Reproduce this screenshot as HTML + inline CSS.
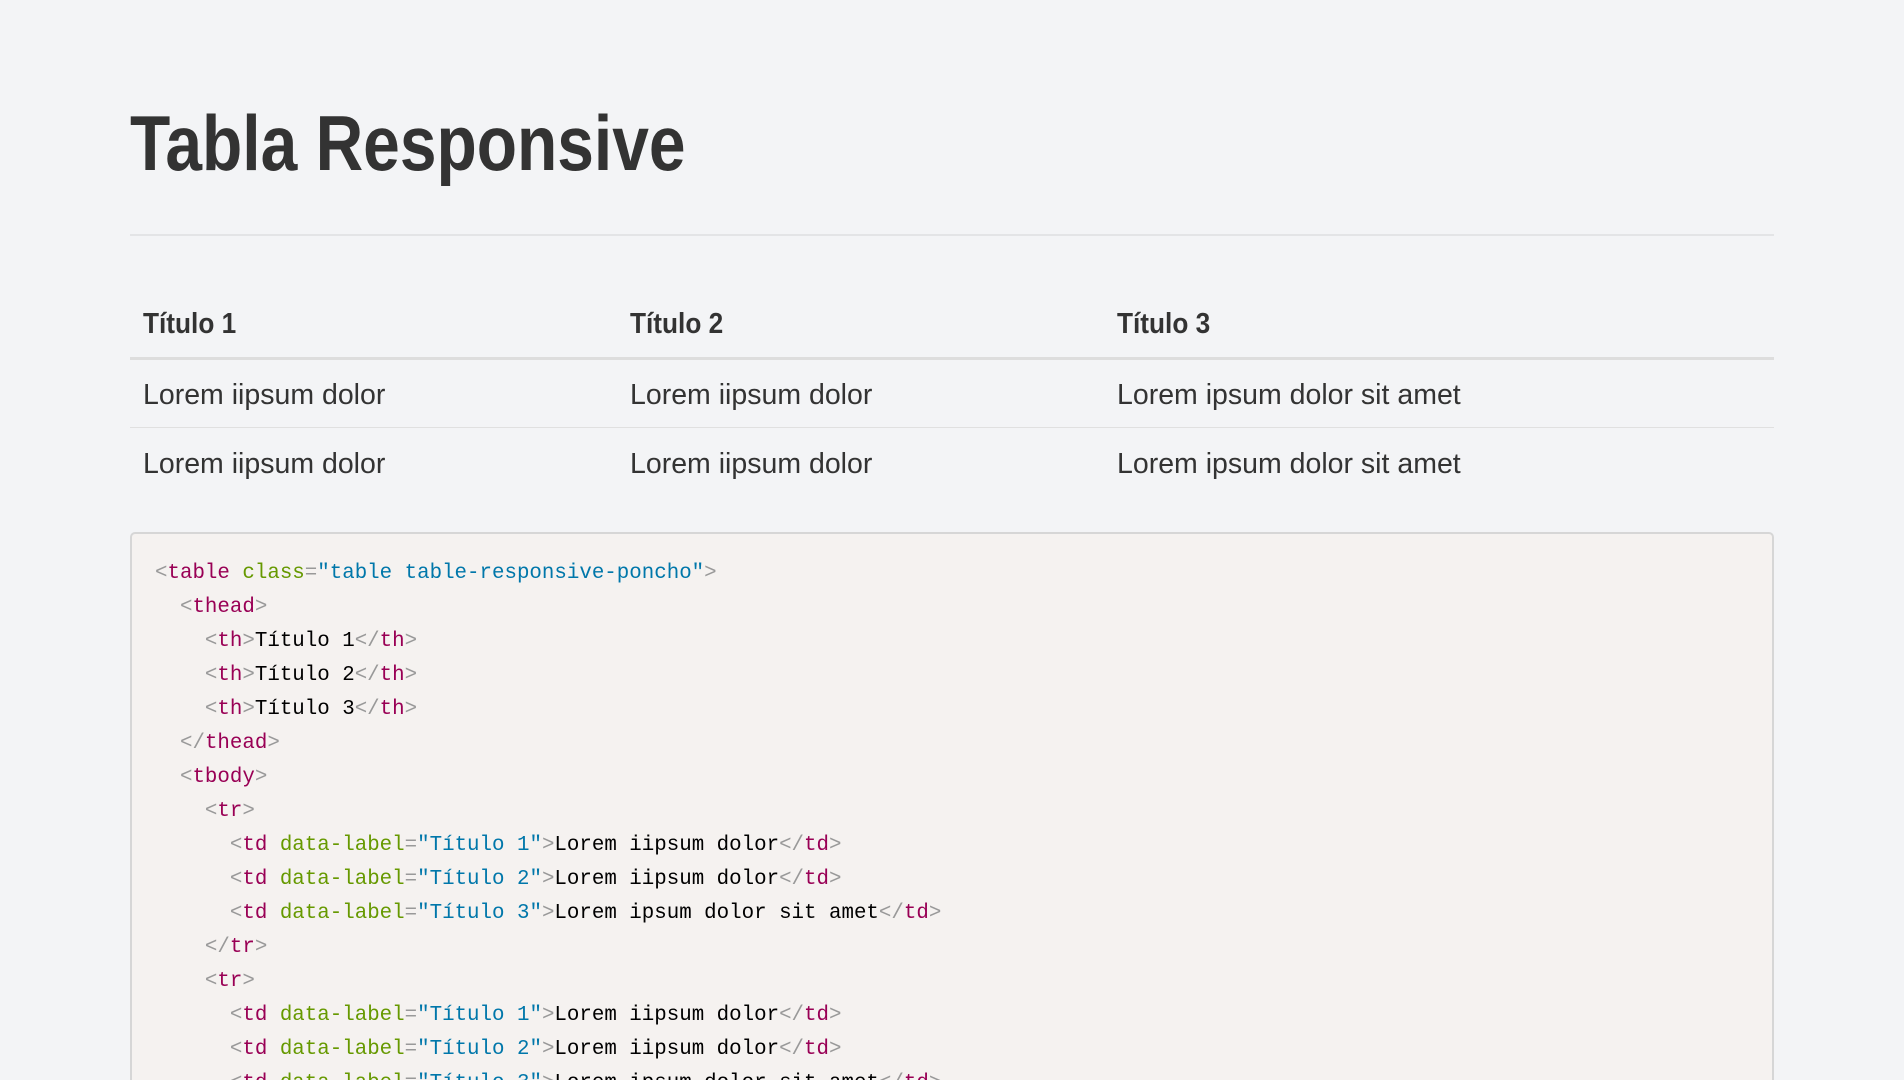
<!DOCTYPE html>
<html><head><meta charset="utf-8"><style>
html,body{margin:0;padding:0;background:#f3f4f6;width:1904px;height:1080px;overflow:hidden;font-family:"Liberation Sans",sans-serif;color:#333;position:relative}
h1{position:absolute;left:130px;top:98px;margin:0;font-size:78px;font-weight:bold;line-height:90px;transform:scaleX(0.845);transform-origin:left top;color:#333;white-space:nowrap}
.hr{position:absolute;left:130px;top:234px;width:1644px;height:2px;background:#e3e4e6}
.th,.td{position:absolute;font-size:28.5px;white-space:nowrap;line-height:30px}
.th{font-weight:bold;transform:scaleX(0.92);transform-origin:left top}
.l{position:absolute;left:130px;width:1644px;background:#ddd}
.code{position:absolute;left:130px;top:532px;width:1640px;height:560px;border:2px solid #d6d6d6;border-bottom:none;border-radius:5px 5px 0 0;background:#f5f2f0}
pre{position:absolute;left:155px;top:557px;margin:0;font-family:"Liberation Mono",monospace;font-size:20.8px;line-height:34px;color:#000}
.t{color:#905}.p{color:#999}.a{color:#690}.v{color:#07a}
</style></head><body>
<h1>Tabla Responsive</h1>
<div class="hr"></div>
<div class="th" style="left:143px;top:309px">Título 1</div>
<div class="th" style="left:630px;top:309px">Título 2</div>
<div class="th" style="left:1117px;top:309px">Título 3</div>
<div class="l" style="top:357px;height:3px"></div>
<div class="td" style="left:143px;top:380px">Lorem iipsum dolor</div>
<div class="td" style="left:630px;top:380px">Lorem iipsum dolor</div>
<div class="td" style="left:1117px;top:380px">Lorem ipsum dolor sit amet</div>
<div class="l" style="top:427px;height:1px;background:#e0e0e0"></div>
<div class="td" style="left:143px;top:449px">Lorem iipsum dolor</div>
<div class="td" style="left:630px;top:449px">Lorem iipsum dolor</div>
<div class="td" style="left:1117px;top:449px">Lorem ipsum dolor sit amet</div>
<div class="code"></div>
<pre><span class="p">&lt;</span><span class="t">table</span> <span class="a">class</span><span class="p">=</span><span class="v">"table table-responsive-poncho"</span><span class="p">&gt;</span>
  <span class="p">&lt;</span><span class="t">thead</span><span class="p">&gt;</span>
    <span class="p">&lt;</span><span class="t">th</span><span class="p">&gt;</span>Título 1<span class="p">&lt;/</span><span class="t">th</span><span class="p">&gt;</span>
    <span class="p">&lt;</span><span class="t">th</span><span class="p">&gt;</span>Título 2<span class="p">&lt;/</span><span class="t">th</span><span class="p">&gt;</span>
    <span class="p">&lt;</span><span class="t">th</span><span class="p">&gt;</span>Título 3<span class="p">&lt;/</span><span class="t">th</span><span class="p">&gt;</span>
  <span class="p">&lt;/</span><span class="t">thead</span><span class="p">&gt;</span>
  <span class="p">&lt;</span><span class="t">tbody</span><span class="p">&gt;</span>
    <span class="p">&lt;</span><span class="t">tr</span><span class="p">&gt;</span>
      <span class="p">&lt;</span><span class="t">td</span> <span class="a">data-label</span><span class="p">=</span><span class="v">"Título 1"</span><span class="p">&gt;</span>Lorem iipsum dolor<span class="p">&lt;/</span><span class="t">td</span><span class="p">&gt;</span>
      <span class="p">&lt;</span><span class="t">td</span> <span class="a">data-label</span><span class="p">=</span><span class="v">"Título 2"</span><span class="p">&gt;</span>Lorem iipsum dolor<span class="p">&lt;/</span><span class="t">td</span><span class="p">&gt;</span>
      <span class="p">&lt;</span><span class="t">td</span> <span class="a">data-label</span><span class="p">=</span><span class="v">"Título 3"</span><span class="p">&gt;</span>Lorem ipsum dolor sit amet<span class="p">&lt;/</span><span class="t">td</span><span class="p">&gt;</span>
    <span class="p">&lt;/</span><span class="t">tr</span><span class="p">&gt;</span>
    <span class="p">&lt;</span><span class="t">tr</span><span class="p">&gt;</span>
      <span class="p">&lt;</span><span class="t">td</span> <span class="a">data-label</span><span class="p">=</span><span class="v">"Título 1"</span><span class="p">&gt;</span>Lorem iipsum dolor<span class="p">&lt;/</span><span class="t">td</span><span class="p">&gt;</span>
      <span class="p">&lt;</span><span class="t">td</span> <span class="a">data-label</span><span class="p">=</span><span class="v">"Título 2"</span><span class="p">&gt;</span>Lorem iipsum dolor<span class="p">&lt;/</span><span class="t">td</span><span class="p">&gt;</span>
      <span class="p">&lt;</span><span class="t">td</span> <span class="a">data-label</span><span class="p">=</span><span class="v">"Título 3"</span><span class="p">&gt;</span>Lorem ipsum dolor sit amet<span class="p">&lt;/</span><span class="t">td</span><span class="p">&gt;</span></pre>
</body></html>
